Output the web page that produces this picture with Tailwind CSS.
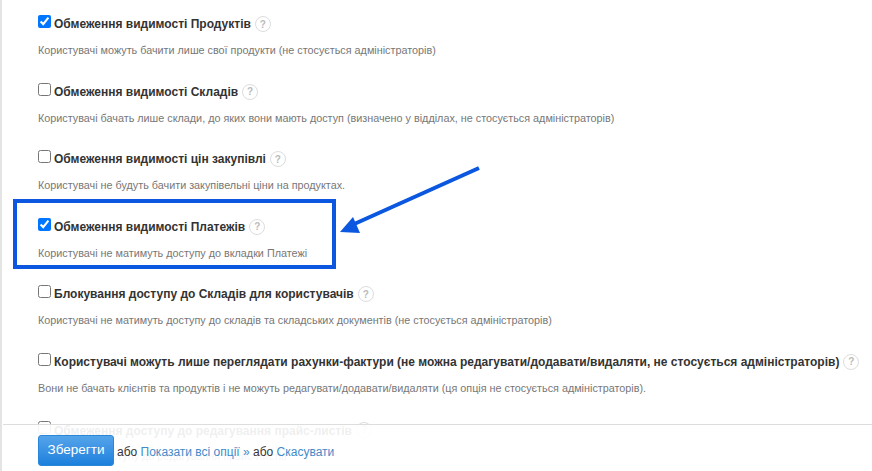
<!DOCTYPE html>
<html>
<head>
<meta charset="utf-8">
<script src="https://cdn.jsdelivr.net/npm/@tailwindcss/browser@4"></script>
</head>
<body class="bg-white overflow-hidden font-['Liberation_Sans',Arial,sans-serif]">
<div class="relative w-[872px] h-[471px] overflow-hidden border-l-2 border-[#e4e4e4]">
  <div class="pl-[36px] pt-[15px]">
    <!-- рядок опції -->
    <div class="h-[67.6px]">
      <div class="flex items-start h-[15px]">
        <input type="checkbox" checked class="w-[13px] h-[13px] m-0 accent-[#0075ff]">
        <span class="ml-[3px] text-[12px] leading-[18px] font-bold text-[#333]">Обмеження видимості Продуктів</span>
        <span class="ml-[4px] mt-[1px] w-[16px] h-[16px] rounded-full border border-[#ddd] text-[#bbb] text-[10px] font-bold flex items-center justify-center">?</span>
      </div>
      <p class="mt-[14px] text-[10.8px] leading-[13px] text-[#777]">Користувачі можуть бачити лише свої продукти (не стосується адміністраторів)</p>
    </div>
    <div class="h-[67.6px]">
      <div class="flex items-start h-[15px]">
        <input type="checkbox" class="w-[13px] h-[13px] m-0">
        <span class="ml-[3px] text-[12px] leading-[18px] font-bold text-[#333]">Обмеження видимості Складів</span>
        <span class="ml-[4px] mt-[1px] w-[16px] h-[16px] rounded-full border border-[#ddd] text-[#bbb] text-[10px] font-bold flex items-center justify-center">?</span>
      </div>
      <p class="mt-[14px] text-[10.8px] leading-[13px] text-[#777]">Користувачі бачать лише склади, до яких вони мають доступ (визначено у відділах, не стосується адміністраторів)</p>
    </div>
    <div class="h-[67.6px]">
      <div class="flex items-start h-[15px]">
        <input type="checkbox" class="w-[13px] h-[13px] m-0">
        <span class="ml-[3px] text-[12px] leading-[18px] font-bold text-[#333]">Обмеження видимості цін закупівлі</span>
        <span class="ml-[4px] mt-[1px] w-[16px] h-[16px] rounded-full border border-[#ddd] text-[#bbb] text-[10px] font-bold flex items-center justify-center">?</span>
      </div>
      <p class="mt-[14px] text-[10.8px] leading-[13px] text-[#777]">Користувачі не будуть бачити закупівельні ціни на продуктах.</p>
    </div>
    <div class="h-[67.6px]">
      <div class="flex items-start h-[15px]">
        <input type="checkbox" checked class="w-[13px] h-[13px] m-0 accent-[#0075ff]">
        <span class="ml-[3px] text-[12px] leading-[18px] font-bold text-[#333]">Обмеження видимості Платежів</span>
        <span class="ml-[4px] mt-[1px] w-[16px] h-[16px] rounded-full border border-[#ddd] text-[#bbb] text-[10px] font-bold flex items-center justify-center">?</span>
      </div>
      <p class="mt-[14px] text-[10.8px] leading-[13px] text-[#777]">Користувачі не матимуть доступу до вкладки Платежі</p>
    </div>
    <div class="h-[67.6px]">
      <div class="flex items-start h-[15px]">
        <input type="checkbox" class="w-[13px] h-[13px] m-0">
        <span class="ml-[3px] text-[12px] leading-[18px] font-bold text-[#333]">Блокування доступу до Складів для користувачів</span>
        <span class="ml-[4px] mt-[1px] w-[16px] h-[16px] rounded-full border border-[#ddd] text-[#bbb] text-[10px] font-bold flex items-center justify-center">?</span>
      </div>
      <p class="mt-[14px] text-[10.8px] leading-[13px] text-[#777]">Користувачі не матимуть доступу до складів та складських документів (не стосується адміністраторів)</p>
    </div>
    <div class="h-[67.6px]">
      <div class="flex items-start h-[15px]">
        <input type="checkbox" class="w-[13px] h-[13px] m-0">
        <span class="ml-[3px] text-[12px] leading-[18px] font-bold text-[#333] whitespace-nowrap">Користувачі можуть лише переглядати рахунки-фактури (не можна редагувати/додавати/видаляти, не стосується адміністраторів)</span>
        <span class="ml-[4px] mt-[1px] w-[16px] h-[16px] shrink-0 rounded-full border border-[#ddd] text-[#bbb] text-[10px] font-bold flex items-center justify-center">?</span>
      </div>
      <p class="mt-[14px] text-[10.8px] leading-[13px] text-[#777]">Вони не бачать клієнтів та продуктів і не можуть редагувати/додавати/видаляти (ця опція не стосується адміністраторів).</p>
    </div>
    <div class="h-[67.6px]">
      <div class="flex items-start h-[15px]">
        <input type="checkbox" class="w-[13px] h-[13px] m-0">
        <span class="ml-[3px] mt-[1px] text-[12px] leading-[18px] font-bold text-[#333]">Обмеження доступу до редагування прайс-листів</span>
        <span class="ml-[4px] mt-[1px] w-[16px] h-[16px] rounded-full border border-[#ddd] text-[#bbb] text-[10px] font-bold flex items-center justify-center">?</span>
      </div>
      <p class="mt-[14px] text-[10.8px] leading-[13px] text-[#777]">Обмеження доступу до редагування прайс-листів</p>
    </div>
  </div>

  <!-- виділення і стрілка -->
  <div class="absolute left-[11px] top-[199px] w-[323px] h-[70px] border-[4px] border-[#0b57e0]"></div>
  <svg class="absolute left-[-2px] top-[0px]" width="872" height="471" viewBox="0 0 872 471" fill="none">
    <path d="M479 168 L352 225" stroke="#0b57e0" stroke-width="4"/>
    <path d="M340 232 L353 217 L360 233 Z" fill="#0b57e0"/>
  </svg>

  <!-- нижня панель -->
  <div class="absolute left-[1px] right-0 top-[424px] h-[47px] bg-white/[0.92] border-t border-[#ddd] flex items-start pl-[35px] pt-[10px] text-[12px] text-[#333]">
    <button class="w-[76px] h-[31px] rounded-[3px] bg-gradient-to-b from-[#54a4ea] to-[#1a80dc] border border-[#2a86d8] text-white text-[13.5px] font-medium">Зберегти</button>
    <span class="ml-[3px] mt-[8px]">або <span class="text-[#428bca]">Показати всі опції »</span> або <span class="text-[#428bca]">Скасувати</span></span>
  </div>
</div>
</body>
</html>
